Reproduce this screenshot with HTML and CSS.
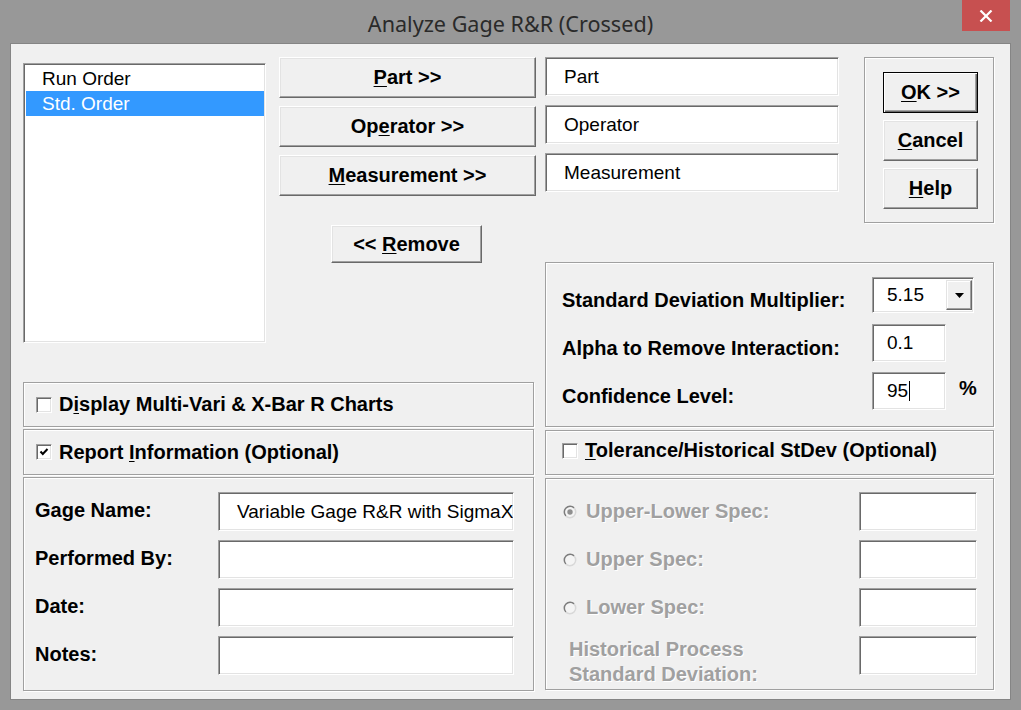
FILE: index.html
```html
<!DOCTYPE html>
<html>
<head>
<meta charset="utf-8">
<title>Analyze Gage R&amp;R (Crossed)</title>
<link rel="stylesheet" href="styles.css">
</head>
<body>
<div class="window">
  <div class="titlebar">
    <div class="title-spacer"></div>
    <div class="title">Analyze Gage R&amp;R (Crossed)</div>
    <div class="close">
      <svg width="14" height="12" viewBox="0 0 14 12"><path d="M1.5 0.5 L12.5 11.5 M12.5 0.5 L1.5 11.5" stroke="#fff" stroke-width="2.2" fill="none"/></svg>
    </div>
  </div>
  <div class="client">
    <div class="col-left">
      <div class="top-left">
        <div class="listbox">
          <div class="list-item">Run Order</div>
          <div class="list-item selected">Std. Order</div>
        </div>
        <div class="var-buttons">
          <button class="btn var-btn"><span><u>P</u>art &gt;&gt;</span></button>
          <button class="btn var-btn"><span>Op<u>e</u>rator &gt;&gt;</span></button>
          <button class="btn var-btn"><span><u>M</u>easurement &gt;&gt;</span></button>
          <button class="btn remove-btn"><span>&lt;&lt; <u>R</u>emove</span></button>
        </div>
      </div>
      <div class="group check-group display-group">
        <span class="checkbox"></span>
        <span class="bold">D<u>i</u>splay Multi-Vari &amp; X-Bar R Charts</span>
      </div>
      <div class="group check-group report-group">
        <span class="checkbox"><svg width="14" height="14" viewBox="0 0 14 14"><path d="M3.5 6.5 L5.8 9 L10.5 4" stroke="#000" stroke-width="2" fill="none"/></svg></span>
        <span class="bold">Report <u>I</u>nformation (Optional)</span>
      </div>
      <div class="group info-group">
        <div class="form-label bold">Gage Name:</div>
        <div class="field info-field"><span class="clip-text">Variable Gage R&amp;R with SigmaXL</span></div>
        <div class="form-label bold">Performed By:</div>
        <div class="field info-field"></div>
        <div class="form-label bold">Date:</div>
        <div class="field info-field"></div>
        <div class="form-label bold">Notes:</div>
        <div class="field info-field"></div>
      </div>
    </div>
    <div class="col-right">
      <div class="top-right">
        <div class="var-fields">
          <div class="field var-field">Part</div>
          <div class="field var-field">Operator</div>
          <div class="field var-field">Measurement</div>
        </div>
        <div class="group ok-group">
          <button class="btn dlg-btn default-btn"><span><u>O</u>K &gt;&gt;</span></button>
          <button class="btn dlg-btn"><span><u>C</u>ancel</span></button>
          <button class="btn dlg-btn"><span><u>H</u>elp</span></button>
        </div>
      </div>
      <div class="group settings-group">
        <div class="set-row">
          <div class="set-label bold">Standard Deviation Multiplier:</div>
          <div class="field combo">
            <span class="combo-text">5.15</span>
            <span class="combo-btn"><svg width="9" height="5" viewBox="0 0 9 5"><path d="M0 0 H9 L4.5 5 Z" fill="#000"/></svg></span>
          </div>
        </div>
        <div class="set-row row-alpha">
          <div class="set-label bold">Alpha to Remove Interaction:</div>
          <div class="field small-field">0.1</div>
        </div>
        <div class="set-row row-conf">
          <div class="set-label bold">Confidence Level:</div>
          <div class="field small-field">95<span class="caret"></span></div>
          <div class="percent bold">%</div>
        </div>
      </div>
      <div class="group check-group tol-group">
        <span class="checkbox"></span>
        <span class="bold"><u>T</u>olerance/Historical StDev (Optional)</span>
      </div>
      <div class="group spec-group">
        <div class="spec-label disabled">
          <svg class="radio" width="14" height="14" viewBox="0 0 14 14"><circle cx="7" cy="7" r="5.8" fill="#f4f4f4"/><path d="M2.9 11.1 A5.8 5.8 0 0 1 11.1 2.9" fill="none" stroke="#7c7c7c" stroke-width="1.5"/><path d="M11.1 2.9 A5.8 5.8 0 0 1 2.9 11.1" fill="none" stroke="#d8d8d8" stroke-width="1.5"/><circle cx="7" cy="7" r="2.7" fill="#8f8f8f"/></svg>
          <span>Upper-Lower Spec:</span>
        </div>
        <div class="field spec-field"></div>
        <div class="spec-label disabled">
          <svg class="radio" width="14" height="14" viewBox="0 0 14 14"><circle cx="7" cy="7" r="5.8" fill="#f4f4f4"/><path d="M2.9 11.1 A5.8 5.8 0 0 1 11.1 2.9" fill="none" stroke="#7c7c7c" stroke-width="1.5"/><path d="M11.1 2.9 A5.8 5.8 0 0 1 2.9 11.1" fill="none" stroke="#d8d8d8" stroke-width="1.5"/></svg>
          <span>Upper Spec:</span>
        </div>
        <div class="field spec-field"></div>
        <div class="spec-label disabled">
          <svg class="radio" width="14" height="14" viewBox="0 0 14 14"><circle cx="7" cy="7" r="5.8" fill="#f4f4f4"/><path d="M2.9 11.1 A5.8 5.8 0 0 1 11.1 2.9" fill="none" stroke="#7c7c7c" stroke-width="1.5"/><path d="M11.1 2.9 A5.8 5.8 0 0 1 2.9 11.1" fill="none" stroke="#d8d8d8" stroke-width="1.5"/></svg>
          <span>Lower Spec:</span>
        </div>
        <div class="field spec-field"></div>
        <div class="hist-label disabled">Historical Process<br>Standard Deviation:</div>
        <div class="field spec-field"></div>
      </div>
    </div>
  </div>
</div>
</body>
</html>
```

FILE: styles.css
```css
* { box-sizing: border-box; }
html, body { margin: 0; padding: 0; }
body {
  width: 1021px;
  height: 710px;
  overflow: hidden;
  font-family: "Liberation Sans", Arial, sans-serif;
  font-size: 19px;
  color: #000;
  background: #989898;
}
u { text-decoration: underline; text-underline-offset: 2px; text-decoration-thickness: 1px; }
.bold { font-weight: bold; font-size: 20px; }

.window {
  width: 1021px;
  height: 710px;
  background: #989898;
  display: flex;
  flex-direction: column;
  padding-bottom: 10px;
}

/* title bar */
.titlebar {
  height: 43px;
  display: grid;
  grid-template-columns: 1fr auto 1fr;
}
.title {
  font-family: "Noto Sans", "Open Sans", sans-serif;
  font-size: 21.6px;
  color: #2a2a2a;
  align-self: center;
  padding-top: 3px;
  white-space: nowrap;
}
.close {
  justify-self: end;
  margin-right: 11px;
  width: 48px;
  height: 31px;
  background: #c75050;
  display: flex;
  align-items: center;
  justify-content: center;
}

/* client */
.client {
  flex: 1;
  margin: 0 10px;
  background: #f0f0f0;
  border: 1px solid #858585;
  padding: 13px 0 0 12px;
  display: flex;
  gap: 9px;
}

/* common controls */
.field {
  background: #fff;
  border: 1px solid;
  border-color: #a0a0a0 #ffffff #ffffff #a0a0a0;
  box-shadow: inset 1px 1px 0 #696969, inset -1px -1px 0 #e3e3e3;
  display: flex;
  align-items: center;
  white-space: nowrap;
  overflow: hidden;
}
.btn {
  font-family: inherit;
  font-size: 20px;
  font-weight: bold;
  color: #000;
  background: #f0f0f0;
  border: 1px solid;
  border-color: #ffffff #696969 #696969 #ffffff;
  box-shadow: inset -1px -1px 0 #a0a0a0, inset 1px 1px 0 #e3e3e3;
  padding: 0;
  margin: 0;
  display: flex;
  align-items: center;
  justify-content: center;
  white-space: pre;
}
.group {
  border: 1px solid #a0a0a0;
  box-shadow: inset 1px 1px 0 #fff, 1px 1px 0 #fff;
}
.checkbox {
  width: 16px;
  height: 16px;
  flex: none;
  background: #fff;
  border: 1px solid;
  border-color: #a0a0a0 #ffffff #ffffff #a0a0a0;
  box-shadow: inset 1px 1px 0 #696969, inset -1px -1px 0 #e3e3e3;
  display: flex;
  align-items: center;
  justify-content: center;
}

/* left column */
.col-left {
  width: 513px;
  display: flex;
  flex-direction: column;
}
.top-left {
  height: 286px;
  display: flex;
  gap: 13px;
}
.listbox {
  width: 243px;
  height: 280px;
  margin-top: 6px;
  background: #fff;
  border: 1px solid;
  border-color: #a0a0a0 #ffffff #ffffff #a0a0a0;
  box-shadow: inset 1px 1px 0 #696969, inset -1px -1px 0 #e3e3e3;
  padding: 2px 1px 2px 1px;
}
.list-item {
  height: 25px;
  padding-left: 17px;
  display: flex;
  align-items: center;
}
.list-item.selected {
  background: #3399ff;
  color: #fff;
  margin-left: 1px;
  padding-left: 16px;
}
.var-buttons {
  width: 257px;
  display: flex;
  flex-direction: column;
  gap: 8px;
}
.var-btn { height: 41px; }
.remove-btn {
  width: 151px;
  height: 38px;
  align-self: center;
  margin-left: -2px;
  margin-top: 21px;
}

.check-group {
  display: flex;
  align-items: center;
  gap: 7px;
  padding-left: 12px;
}
.display-group { width: 511px; height: 45px; margin-top: 39px; }
.report-group { width: 511px; height: 46px; margin-top: 2px; }
.report-group .checkbox svg { display: block; }

.info-group {
  width: 511px;
  height: 214px;
  margin-top: 2px;
  padding: 14px 19px 0 11px;
  display: grid;
  grid-template-columns: 183px 296px;
  grid-auto-rows: 39px;
  row-gap: 9px;
  align-items: center;
}
.info-group .form-label { padding-bottom: 3px; }
.info-field { height: 39px; padding-left: 18px; }
.clip-text { white-space: nowrap; }

/* right column */
.col-right {
  width: 449px;
  display: flex;
  flex-direction: column;
}
.top-right {
  display: flex;
  align-items: flex-start;
}
.var-fields {
  width: 294px;
  display: flex;
  flex-direction: column;
  gap: 9px;
}
.var-field { height: 39px; padding-left: 18px; }
.ok-group {
  width: 130px;
  height: 166px;
  margin-left: 25px;
  padding: 14px 0 0 18px;
  display: flex;
  flex-direction: column;
  gap: 7px;
}
.dlg-btn { width: 95px; height: 41px; }
.default-btn {
  border: 1px solid #000;
  box-shadow: inset 1px 1px 0 #fff, inset -1px -1px 0 #696969, inset -2px -2px 0 #a0a0a0;
}

.settings-group {
  height: 165px;
  margin-top: 39px;
  padding: 14px 0 0 16px;
  display: flex;
  flex-direction: column;
}
.set-row {
  display: flex;
  align-items: center;
}
.row-alpha { margin-top: 11px; }
.row-conf { margin-top: 10px; }
.set-label {
  width: 310px;
  padding-top: 10px;
  white-space: nowrap;
}
.combo {
  width: 102px;
  height: 36px;
  padding: 2px 1px 2px 14px;
  align-items: stretch;
}
.combo-text {
  flex: 1;
  display: flex;
  align-items: center;
}
.combo-btn {
  width: 26px;
  background: #f0f0f0;
  border: 1px solid;
  border-color: #e3e3e3 #696969 #696969 #e3e3e3;
  box-shadow: inset -1px -1px 0 #a0a0a0, inset 1px 1px 0 #fff;
  display: flex;
  align-items: center;
  justify-content: center;
}
.small-field {
  width: 74px;
  height: 38px;
  padding-left: 14px;
}
.caret {
  display: inline-block;
  width: 1px;
  height: 20px;
  background: #000;
  margin-left: 1px;
}
.percent {
  align-self: flex-start;
  margin-top: 5px;
  margin-left: 13px;
}

.tol-group {
  height: 45px;
  margin-top: 3px;
  padding-left: 16px;
  padding-bottom: 4px;
}

.spec-group {
  height: 212px;
  margin-top: 3px;
  padding: 13px 16px 0 17px;
  display: grid;
  grid-template-columns: 296px 118px;
  grid-template-rows: 39px 39px 39px 39px;
  row-gap: 9px;
}
.disabled {
  color: #a0a0a0;
  text-shadow: 1px 1px 0 #fff;
  font-weight: bold;
  font-size: 20px;
}
.spec-label {
  display: flex;
  align-items: center;
  gap: 9px;
  white-space: nowrap;
}
.radio { flex: none; }
.hist-label {
  margin-left: 6px;
  margin-top: 1px;
  line-height: 25px;
  white-space: nowrap;
}
.spec-field { height: 39px; }
```
